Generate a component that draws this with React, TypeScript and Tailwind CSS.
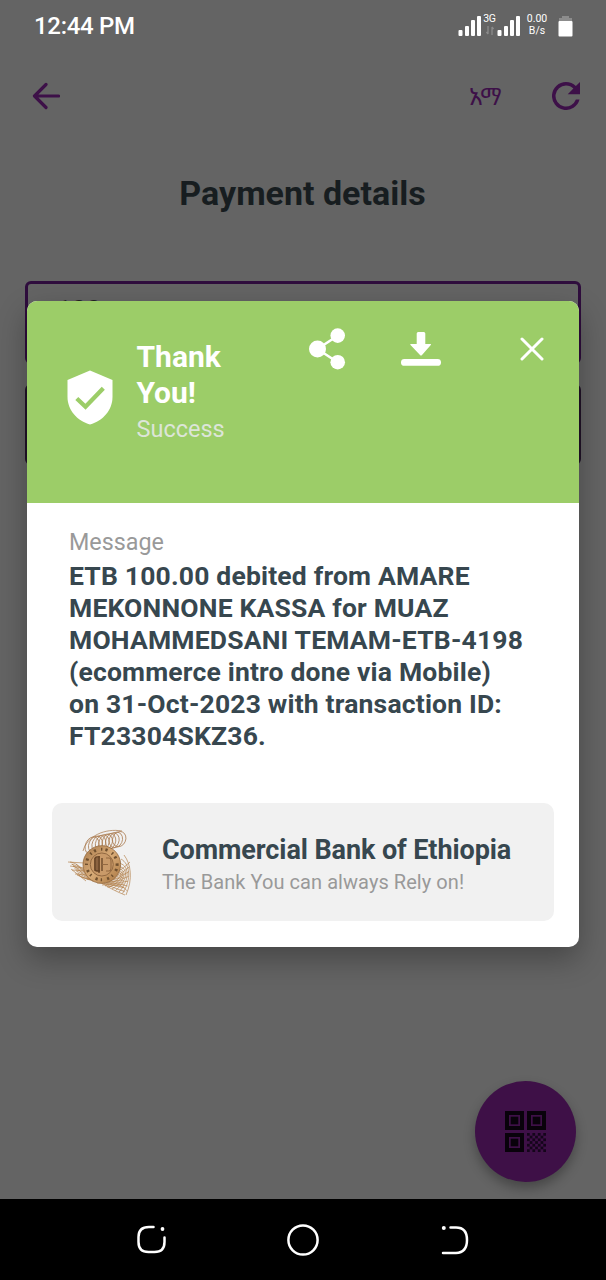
import React from 'react';

function SignalBars() {
  return (
    <svg className="h-5 w-6 shrink-0" viewBox="0 0 24 20" fill="#fff">
      <rect x="0.5" y="14" width="4" height="6" rx="1" />
      <rect x="7" y="10" width="4" height="10" rx="1" />
      <rect x="13" y="4" width="4" height="16" rx="1" />
      <rect x="19" y="0" width="4" height="20" rx="1" />
    </svg>
  );
}

function StatusBar() {
  return (
    <header className="flex h-[51px] w-full items-start pl-[34px] pr-[33px] text-white">
      <span className="mt-[11px] text-[24px] font-medium leading-[30px] tracking-[-0.3px]">12:44 PM</span>
      <div className="ml-auto flex items-start">
        <div className="mt-4 flex">
          <SignalBars />
          <div className="-mt-1 flex w-[15px] flex-col items-center">
            <span className="text-[10.5px] leading-[14px] tracking-[-0.2px]">3G</span>
            <svg className="h-[9px] w-2" viewBox="0 0 8 9" fill="none" stroke="#8b8b8b" strokeWidth="1.3">
              <path d="M2 0v8M.5 6 2 8M6 9V1m1.5 2L6 1" />
            </svg>
          </div>
          <SignalBars />
        </div>
        <div className="ml-[5px] mt-[13px] flex w-[22px] flex-col items-center whitespace-nowrap text-[10.5px] leading-[12px]">
          <span>0.00</span>
          <span>B/s</span>
        </div>
        <svg className="ml-[10px] mt-[15px] h-[22px] w-[15px]" viewBox="0 0 15 22">
          <path d="M4 1h7v2h3v4H1V3h3z" fill="#8c8c8c" />
          <rect x="0.5" y="6" width="14" height="15.5" rx="1" fill="#fff" />
        </svg>
      </div>
    </header>
  );
}

function TopBar() {
  return (
    <nav className="flex h-[90px] items-center pl-8 pr-[26px] text-[#3d1048]">
      <svg className="-mt-px h-7 w-7" viewBox="0 0 28 28" fill="none" stroke="currentColor" strokeWidth="3.2" strokeLinecap="round" strokeLinejoin="round">
        <path d="M26.5 14H3M14 2.5 2.5 14 14 25.5" />
      </svg>
      <span className="ml-auto w-[32px] whitespace-nowrap font-['Noto_Sans_Ethiopic','Abyssinica_SIL','Noto_Sans',sans-serif] text-[24px] leading-7">አማ</span>
      <svg className="ml-[51px] h-[28px] w-[28px]" viewBox="4 4 16 16" fill="currentColor">
        <path d="M17.65 6.35A7.958 7.958 0 0 0 12 4a8 8 0 1 0 7.730 10h-2.080A6 6 0 1 1 12 6c1.660 0 3.140.690 4.220 1.780L13 11h7V4z" />
      </svg>
    </nav>
  );
}

function PaymentPage() {
  return (
    <main className="flex flex-1 flex-col">
      <h1 className="mt-[31px] pr-px text-center text-[34px] font-bold leading-[42px] text-[#171d20]">Payment details</h1>
      <section className="mx-[25px] mt-[67px] flex flex-col gap-[20px]">
        <div className="h-[83px] rounded-md border-[3px] border-[#2f0d3d] pl-[29px] pt-[12px] text-[26px] leading-7 text-[#222]">100</div>
        <div className="h-[81px] rounded-md border-2 border-[#211328]" />
      </section>
    </main>
  );
}

function ShieldIcon() {
  return (
    <svg className="ml-10 mt-[69px] h-[55px] w-[46px] shrink-0" viewBox="0 0 46 55">
      <path d="M23 .5 45.500 10v17c0 13-9.700 24-22.500 27.500C10.200 51 .5 40 .5 27V10z" fill="#fff" />
      <path d="m9.800 28.500 8.700 8.300L36.300 18.300" fill="none" stroke="#9ccd68" strokeWidth="4.300" />
    </svg>
  );
}

function ShareIcon() {
  return (
    <svg className="h-[42px] w-[37px] shrink-0" viewBox="0 0 37 42" fill="#fff">
      <path d="M29 7.500 8.500 21 29 34.500" fill="none" stroke="#fff" strokeWidth="2.500" />
      <circle cx="8.500" cy="21" r="8.500" />
      <circle cx="28.700" cy="7.600" r="7.300" />
      <circle cx="28.700" cy="34.200" r="7.300" />
    </svg>
  );
}

function DownloadIcon() {
  return (
    <svg className="h-[36px] w-[42px] shrink-0" viewBox="0 0 42 36" fill="#fff">
      <path d="M18.200 1h5.600q1.500 0 1.500 1.500V13h5q1.500 0 .5 1L22 24q-1 1-2 0l-9.500-10q-1-1 .5-1h5.700V2.500Q16.700 1 18.200 1z" />
      <rect x="1" y="28" width="40" height="6.800" rx="3.400" />
    </svg>
  );
}

function BankLogo() {
  const loops = [0, 1, 2, 3, 4, 5, 6, 7, 8];
  const bands = [0, 1, 2, 3, 4, 5, 6];
  return (
    <svg className="mt-0.5 h-[68px] w-[66px] shrink-0" viewBox="0 0 66 68" fill="none">
      <defs>
        <linearGradient id="coin" x1="0" y1="0" x2="1" y2="1">
          <stop offset="0" stopColor="#a87a4c" />
          <stop offset="0.500" stopColor="#d8ab77" />
          <stop offset="1" stopColor="#a87540" />
        </linearGradient>
      </defs>
      <g stroke="#a8774a" strokeWidth="0.700">
        {loops.map((i) => (
          <ellipse key={i} cx={25 + i * 3.400} cy={16.500 - i * 0.800} rx={6.500} ry={9 - i * 0.150} transform={`rotate(24 ${25 + i * 3.400} ${16.500 - i * 0.800})`} />
        ))}
        <path d="M16 22C20 7 38-1 55 2" />
      </g>
      <g stroke="#b07c44" strokeWidth="0.650">
        {bands.map((i) => (
          <path key={i} d={`M${3 + i * 1.500} ${33 + i * 2.200}C${14 + i} ${34 + i * 3} ${25 + i * 2} ${53 + i * 0.500} ${58 - i * 0.300} ${66 - i * 3.600}`} />
        ))}
        {bands.map((i) => (
          <path key={i} d={`M${10 + i * 5} ${46 + i * 2}Q${36 + i * 3} ${59 - i} ${63 - i * 0.500} ${33 + i * 4.800}`} />
        ))}
        {bands.map((i) => (
          <path key={i} d={`M${57 - i * 3} ${26 + i * 4}C${64 - i} 35 ${66 - i} 50 ${59 - i * 3.500} ${66 - i * 1.500}`} />
        ))}
        <path d="M1 33l16 1M3 37l14 2M5 41l13 1M8 45l12 1M5 35l17 15M9 35l14 13M4 40l15 12" />
      </g>
      <circle cx="34.800" cy="35.500" r="18.800" fill="url(#coin)" stroke="#946a3f" strokeWidth="0.800" />
      <circle cx="34.800" cy="35.500" r="15.300" stroke="#70502f" strokeWidth="3" strokeDasharray="1.400 3.100 2.200 5.100" />
      <circle cx="34.800" cy="35.500" r="11.500" stroke="#936941" strokeWidth="1" fill="#c99a69" />
      <path d="M27 29h6v13h-6z" fill="#8c6340" />
      <path d="M33 28h-3q-2 0-2 2v10q0 2 2 2h3M32 27v17M35 29v13" stroke="#654325" strokeWidth="1.300" />
      <path d="M39 29h3q2 0 2 3v7q0 3-2 3h-3M35 35.500h6" stroke="#936941" strokeWidth="1.100" />
    </svg>
  );
}

function SuccessDialog() {
  return (
    <div role="dialog" className="absolute left-[27px] top-[301px] flex h-[646px] w-[552px] flex-col overflow-hidden rounded-[10px] bg-white shadow-[0_12px_30px_rgba(0,0,0,0.3)]">
      <div className="flex h-[202px] shrink-0 items-start bg-[#9ccd68]">
        <ShieldIcon />
        <div className="ml-[23.5px] mt-[38px] w-[120px]">
          <h2 className="w-[100px] text-[30px] font-bold leading-9 text-white">Thank You!</h2>
          <p className="text-[23.5px] leading-[36px] text-[#dce5d8]">Success</p>
        </div>
        <div className="ml-[52.5px] mt-[27px] flex items-center">
          <ShareIcon />
          <div className="ml-[54px]"><DownloadIcon /></div>
          <svg className="ml-[78px] h-6 w-6" viewBox="0 0 24 24" fill="none" stroke="#fff" strokeWidth="3" strokeLinecap="round">
            <path d="m2 2 20 20M22 2 2 22" />
          </svg>
        </div>
      </div>
      <div className="flex flex-1 flex-col px-[25px] pb-[26px] pt-[23px]">
        <p className="pl-[17px] text-[23.300px] leading-[32px] text-[#999]">Message</p>
        <p className="whitespace-nowrap pl-[17px] pt-[2px] text-[26.500px] font-bold leading-[32px] tracking-[0.180px] text-[#37474f]">
          ETB 100.00 debited from AMARE<br />MEKONNONE KASSA for MUAZ<br />MOHAMMEDSANI TEMAM-ETB-4198<br />(ecommerce intro done via Mobile)<br />on 31-Oct-2023 with transaction ID:<br />FT23304SKZ36.
        </p>
        <div className="mt-auto flex h-[118px] items-center rounded-[10px] bg-[#f1f1f1] pl-[15px]">
          <BankLogo />
          <div className="ml-[29px] mt-2 whitespace-nowrap">
            <p className="text-[27px] font-bold leading-8 tracking-[-0.090px] text-[#37474f]">Commercial Bank of Ethiopia</p>
            <p className="text-[20px] leading-8 tracking-[0.060px] text-[#999]">The Bank You can always Rely on!</p>
          </div>
        </div>
      </div>
    </div>
  );
}

function Finder({ x, y }: { x: number; y: number }) {
  return (
    <g>
      <rect x={x + 2} y={y + 2} width="15" height="15" fill="none" stroke="#09020b" strokeWidth="4" />
      <rect x={x + 5.700} y={y + 5.700} width="7.600" height="7.600" fill="#09020b" />
    </g>
  );
}

function ScanButton() {
  const cells = Array.from({ length: 49 }, (_, i) => i).filter((i) => i % 2 === 0);
  return (
    <button className="absolute left-[475px] top-[1081px] flex h-[101px] w-[101px] items-center justify-center rounded-full bg-[#3e1047] shadow-[0_6px_12px_rgba(0,0,0,0.3)]">
      <svg className="h-[41px] w-[41px]" viewBox="0 0 41 41">
        <Finder x={0} y={0} />
        <Finder x={22} y={0} />
        <Finder x={0} y={22} />
        {cells.map((i) => (
          <rect key={i} x={22 + (i % 7) * 2.714} y={22 + Math.floor(i / 7) * 2.714} width="2.714" height="2.714" fill="#14051a" />
        ))}
      </svg>
    </button>
  );
}

function SystemNav() {
  return (
    <footer className="flex h-[81px] shrink-0 items-center justify-between bg-black pl-[135px] pr-[136px]">
      <svg className="h-8 w-8" viewBox="0 0 32 32" fill="none" stroke="#fff" strokeWidth="2.500" strokeLinecap="round">
        <path d="M18.500 3H14Q3.500 3 3.500 13v5q0 10 10 10h6q10 0 10-10v-4.500" />
        <circle cx="27.500" cy="5" r="1.900" fill="#fff" stroke="none" />
      </svg>
      <svg className="h-8 w-8" viewBox="0 0 32 32" fill="none">
        <circle cx="16" cy="16" r="14.600" stroke="#fff" strokeWidth="2.500" />
      </svg>
      <svg className="h-8 w-8" viewBox="0 0 32 32" fill="none" stroke="#fff" strokeWidth="2.500" strokeLinecap="round">
        <path d="M12.500 3.500H18Q29 3.500 29 16T18 29H5" />
        <circle cx="5.800" cy="4" r="2" fill="#fff" stroke="none" />
      </svg>
    </footer>
  );
}

export default function App() {
  return (
    <div className="relative flex h-[1280px] w-[606px] flex-col overflow-hidden bg-[#646464] font-['Roboto',sans-serif]">
      <StatusBar />
      <TopBar />
      <PaymentPage />
      <SystemNav />
      <ScanButton />
      <SuccessDialog />
    </div>
  );
}
